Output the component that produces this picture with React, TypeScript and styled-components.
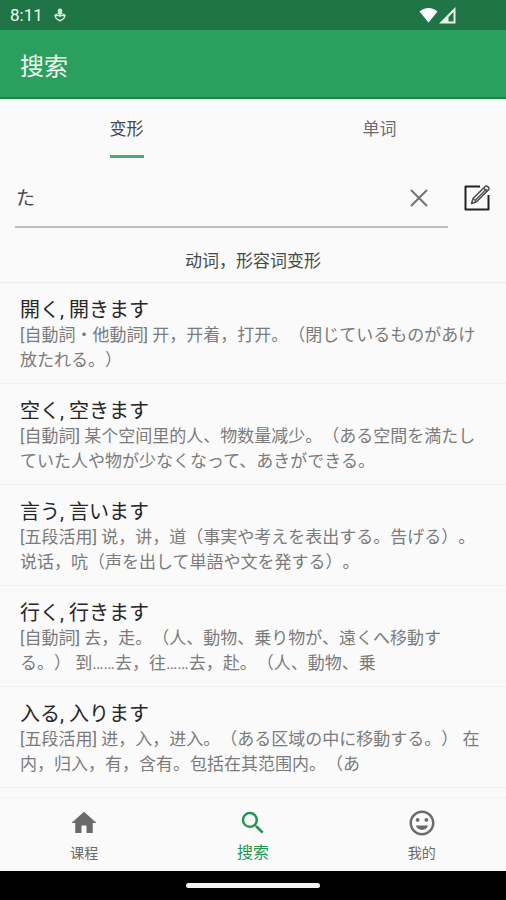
import React, { useState } from "react";
import styled, { createGlobalStyle } from "styled-components";

const GlobalStyle = createGlobalStyle`
  *, *::before, *::after { box-sizing: border-box; }
  html, body, #root { height: 100%; }
  body {
    margin: 0;
    background: #fafafa;
    color: #484848;
    font-family: Roboto, "Noto Sans CJK SC", sans-serif;
    text-spacing-trim: space-all;
  }
  button, input { font: inherit; color: inherit; }
`;

const Screen = styled.div`
  display: flex;
  flex-direction: column;
  height: 100%;
  min-height: 100vh;
`;

const StatusBar = styled.div`
  display: flex;
  align-items: center;
  flex: none;
  height: 30px;
  padding: 0 50px 0 10px;
  background: #1f7546;
  color: #f1f8f1;
  font-size: 17px;
`;

const Clock = styled.span`
  margin-right: 11px;
`;

const Signals = styled.div`
  display: flex;
  align-items: center;
  gap: 1px;
  margin-left: auto;
`;

const AppBar = styled.header`
  display: flex;
  align-items: center;
  flex: none;
  height: 69px;
  padding: 6px 20px 0;
  background: #2b9f5e;
  border-bottom: 2px solid #16873f;
`;

const Title = styled.h1`
  margin: 0;
  color: #f4fbf2;
  font-size: 24px;
  font-weight: 400;
  line-height: 32px;
`;

const Tabs = styled.div`
  display: grid;
  grid-template-columns: 1fr 1fr;
  flex: none;
  height: 59px;
`;

const Tab = styled.button<{ $active: boolean }>`
  display: flex;
  justify-content: center;
  align-items: stretch;
  padding: 0;
  border: 0;
  background: none;
  font-size: 17px;
  line-height: 24px;
  color: ${(p) => (p.$active ? "#484848" : "#6c6c6c")};

  span {
    padding-top: 18px;
    border-bottom: 3px solid ${(p) => (p.$active ? "#50a878" : "transparent")};
  }
`;

const SearchRow = styled.form`
  display: flex;
  align-items: center;
  flex: none;
  gap: 15px;
  height: 80px;
  padding: 0 15px;
`;

const Field = styled.div`
  display: flex;
  align-items: center;
  flex: 1;
  min-width: 0;
  height: 60px;
  padding-right: 18px;
  border-bottom: 2px solid #bcbcbc;
`;

const TextInput = styled.input`
  flex: 1;
  min-width: 0;
  padding: 4px 1px 0;
  border: 0;
  outline: none;
  background: transparent;
  font-size: 19px;
  line-height: 28px;
`;

const IconButton = styled.button`
  display: flex;
  flex: none;
  padding: 0;
  border: 0;
  background: none;
`;

const Caption = styled.h2`
  flex: none;
  margin: 0;
  padding: 11px 20px 9px;
  border-bottom: 1px solid #efefef;
  font-size: 17px;
  font-weight: 400;
  line-height: 24px;
  text-align: center;
`;

const WordList = styled.ul`
  flex: 1;
  min-height: 0;
  margin: 0;
  padding: 0;
  overflow: hidden;
  list-style: none;
`;

const WordItem = styled.li`
  padding: 15px 20px 10px;
  border-bottom: 1px solid #efefef;
  line-height: 25px;
`;

const Word = styled.h3`
  margin: 0;
  color: #262626;
  font-size: 20px;
  font-weight: 400;
  line-height: 25px;
`;

const Meaning = styled.p`
  margin: 0;
  color: #7b7b7b;
  font-size: 17px;
`;

const BottomNav = styled.nav`
  display: grid;
  grid-template-columns: repeat(3, 1fr);
  flex: none;
  height: 74px;
  border-top: 1px solid #f2f2f2;
`;

const NavLink = styled.a<{ $active: boolean }>`
  display: flex;
  flex-direction: column;
  align-items: center;
  gap: 4px;
  padding-top: 10px;
  color: ${(p) => (p.$active ? "#1f9650" : "#6a6a6a")};
  font-size: ${(p) => (p.$active ? 16 : 14)}px;
  line-height: 22px;
  text-decoration: none;
`;

const SystemBar = styled.div`
  display: flex;
  justify-content: center;
  align-items: center;
  flex: none;
  height: 29px;
  background: #000;
`;

const HomeHandle = styled.div`
  width: 134px;
  height: 5px;
  border-radius: 3px;
  background: #f2f2f2;
`;

const DebugIcon = () => (
  <svg width="12" height="14" viewBox="0 0 12 14" aria-hidden="true">
    <circle cx="6" cy="3" r="2.4" fill="#d5e9d6" />
    <path d="M6 3v6M3.5 5.500h5M1 7.500l2-1.500M11 7.500 9 6" fill="none" stroke="#d5e9d6" strokeWidth="1.500" />
    <path d="M1 7.500h10c-.4 2.500-2.400 4.200-5 5.300-2.600-1.100-4.600-2.800-5-5.300Z" fill="none" stroke="#d5e9d6" strokeWidth="1.500" />
  </svg>
);

const WifiIcon = () => (
  <svg width="19" height="16" viewBox="0 0 19 16" aria-hidden="true">
    <path d="M.5 4.500C5.500-.3 13.500-.3 18.500 4.500L9.500 15.500Z" fill="#fff" />
  </svg>
);

const CellIcon = () => (
  <svg width="17" height="17" viewBox="0 0 17 17" aria-hidden="true">
    <path d="M0 16.500 16.500 0v16.500Z" fill="#eaf5e9" />
    <path d="M9.500 10 14.500 5v9.500h-5Z" fill="#1f7546" />
  </svg>
);

const CloseIcon = () => (
  <svg width="22" height="22" viewBox="0 0 22 22" aria-hidden="true">
    <path d="M3 4l16 16M19 4 3 20" stroke="#727272" strokeWidth="2" />
  </svg>
);

const EditIcon = () => (
  <svg width="28" height="28" viewBox="0 0 28 28" fill="none" aria-hidden="true">
    <path d="M17 2.500H2.500v23h23V11" stroke="#222" strokeWidth="2" strokeLinejoin="round" />
    <path d="m8.500 19.500 1.700-5.200L22.500 2.200c1.200-1 4.400 1.800 3.300 3.200L13.500 17.800Z" stroke="#4a4a4a" strokeWidth="1.500" strokeLinejoin="round" />
    <path d="m12.500 16 11-11M20.500 4l3.500 3.500M10.200 14.300l3.300 3.500" stroke="#4a4a4a" strokeWidth="1.200" />
  </svg>
);

const NAV_PATHS = {
  home: "M10 20v-6h4v6h5v-8h3L12 3 2 12h3v8z",
  search:
    "M15.500 14h-.79l-.28-.27A6.471 6.471 0 0 0 16 9.500 6.500 6.500 0 1 0 9.500 16c1.610 0 3.090-.59 4.230-1.570l.27.28v.79l5 4.990L20.490 19l-4.990-5zm-6 0C7.010 14 5 11.990 5 9.500S7.010 5 9.500 5 14 7.010 14 9.500 11.990 14 9.500 14z",
  face: "M11.990 2C6.470 2 2 6.480 2 12s4.470 10 9.990 10C17.520 22 22 17.520 22 12S17.520 2 11.990 2zM12 20c-4.420 0-8-3.580-8-8s3.580-8 8-8 8 3.580 8 8-3.580 8-8 8zm3.500-9c.83 0 1.500-.67 1.500-1.500S16.330 8 15.500 8 14 8.670 14 9.500s.67 1.500 1.500 1.500zm-7 0c.83 0 1.500-.67 1.500-1.500S9.330 8 8.500 8 7 8.670 7 9.500 7.670 11 8.500 11zM7 14c.8 2.040 2.700 3.500 5 3.500s4.200-1.460 5-3.500z",
};

const NavIcon = ({ name }: { name: keyof typeof NAV_PATHS }) => (
  <svg width="30" height="30" viewBox="0 0 24 24" fill="currentColor" aria-hidden="true">
    <path d={NAV_PATHS[name]} />
  </svg>
);

const TABS = ["变形", "单词"];

const WORDS = [
  { word: "開く, 開きます", meaning: "[自動詞・他動詞] 开，开着，打开。（閉じているものがあけ放たれる。）" },
  { word: "空く, 空きます", meaning: "[自動詞] 某个空间里的人、物数量减少。（ある空間を満たしていた人や物が少なくなって、あきができる。" },
  { word: "言う, 言います", meaning: "[五段活用] 说，讲，道（事実や考えを表出する。告げる）。说话，吭（声を出して単語や文を発する）。" },
  { word: "行く, 行きます", meaning: "[自動詞] 去，走。（人、動物、乗り物が、遠くへ移動する。） 到……去，往……去，赴。（人、動物、乗" },
  { word: "入る, 入ります", meaning: "[五段活用] 进，入，进入。（ある区域の中に移動する。） 在内，归入，有，含有。包括在其范围内。（あ" },
];

const NAV: { name: keyof typeof NAV_PATHS; label: string }[] = [
  { name: "home", label: "课程" },
  { name: "search", label: "搜索" },
  { name: "face", label: "我的" },
];

export default function App() {
  const [tab, setTab] = useState(0);
  const [query, setQuery] = useState("た");

  return (
    <Screen>
      <GlobalStyle />
      <StatusBar>
        <Clock>8:11</Clock>
        <DebugIcon />
        <Signals>
          <WifiIcon />
          <CellIcon />
        </Signals>
      </StatusBar>
      <AppBar>
        <Title>搜索</Title>
      </AppBar>
      <Tabs role="tablist">
        {TABS.map((label, i) => (
          <Tab key={label} type="button" role="tab" aria-selected={i === tab} $active={i === tab} onClick={() => setTab(i)}>
            <span>{label}</span>
          </Tab>
        ))}
      </Tabs>
      <SearchRow onSubmit={(e) => e.preventDefault()}>
        <Field>
          <TextInput aria-label="搜索" value={query} onChange={(e) => setQuery(e.target.value)} />
          <IconButton type="button" aria-label="清除" onClick={() => setQuery("")}>
            <CloseIcon />
          </IconButton>
        </Field>
        <IconButton type="button" aria-label="手写">
          <EditIcon />
        </IconButton>
      </SearchRow>
      <Caption>动词，形容词变形</Caption>
      <WordList>
        {WORDS.map(({ word, meaning }) => (
          <WordItem key={word}>
            <Word>{word}</Word>
            <Meaning>{meaning}</Meaning>
          </WordItem>
        ))}
      </WordList>
      <BottomNav>
        {NAV.map(({ name, label }) => (
          <NavLink key={name} href={`#${name}`} $active={name === "search"}>
            <NavIcon name={name} />
            {label}
          </NavLink>
        ))}
      </BottomNav>
      <SystemBar>
        <HomeHandle />
      </SystemBar>
    </Screen>
  );
}
